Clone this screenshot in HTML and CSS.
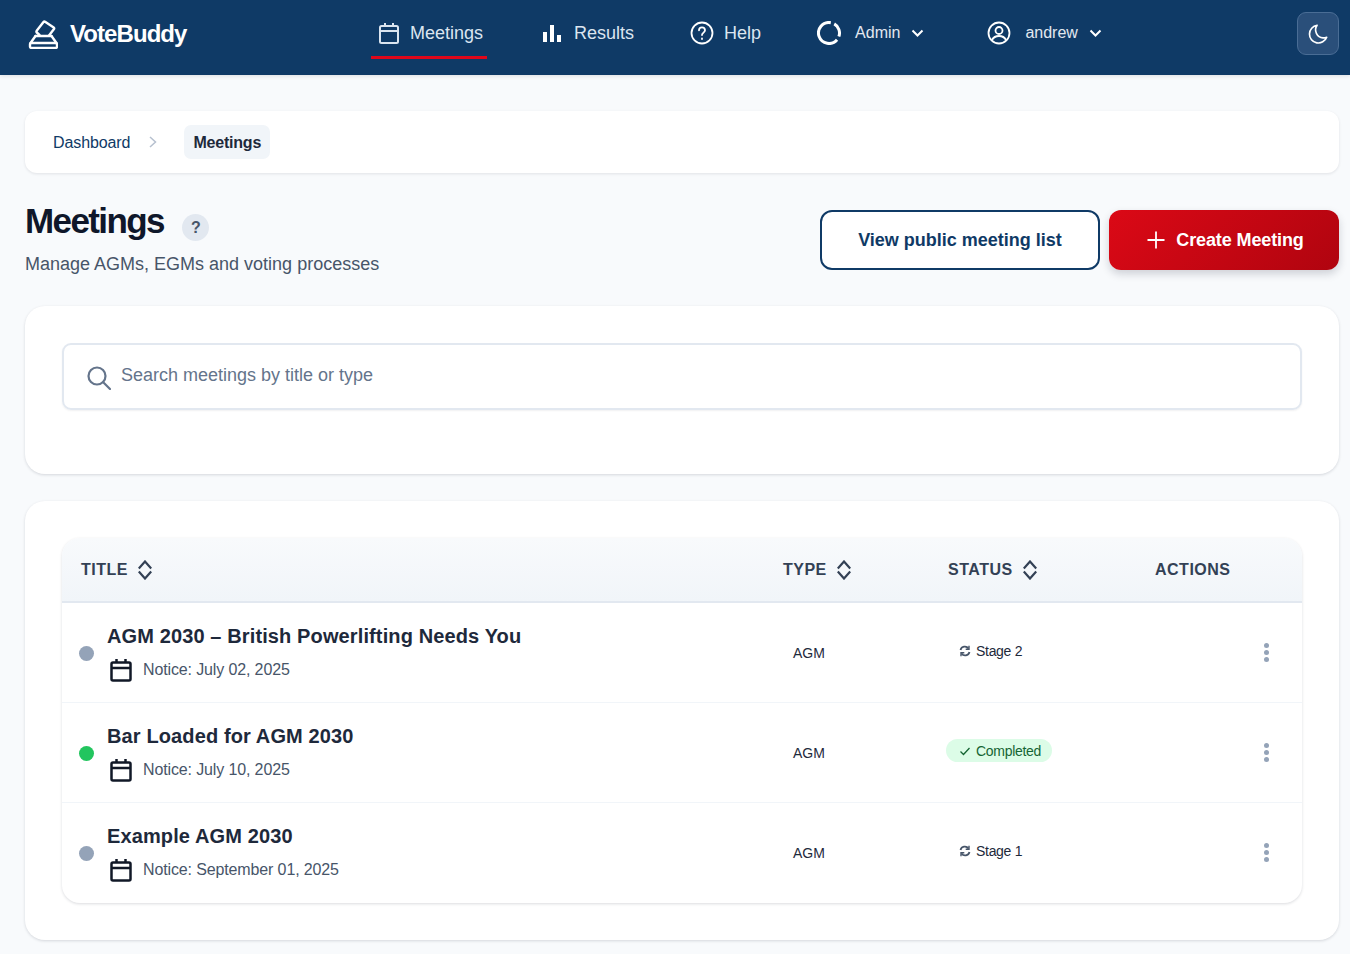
FILE: index.html
```html
<!DOCTYPE html>
<html lang="en">
<head>
<meta charset="utf-8">
<title>Meetings - VoteBuddy</title>
<link rel="stylesheet" href="styles.css">
</head>
<body>
<header class="topbar">
  <a class="brand">
    <svg class="brand-icon" viewBox="0 0 30 30" fill="none" stroke="currentColor" stroke-width="2.400" stroke-linejoin="round" stroke-linecap="round"><path d="M11.500 16 8.800 13.500a1.200 1.200 0 0 1-.1-1.700L15.500 3a1.200 1.200 0 0 1 1.600-.3l8.600 5.700a1.200 1.200 0 0 1 .3 1.700L21 16.500"/><path d="M7.500 17h16"/><path d="M7.500 17 2.500 24M23.500 17l5 7"/><rect x="2" y="24" width="27" height="5" rx="1.500"/></svg>
    <span>VoteBuddy</span>
  </a>
  <nav class="nav">
    <a class="nav-item nav-active nav-meetings">
      <svg class="nav-icon" viewBox="0 0 24 24" fill="none" stroke="currentColor" stroke-width="2"><rect x="3" y="5" width="18" height="17" rx="1.500"/><path d="M3 10h18M8 2v4M16 2v4"/></svg>
      <span>Meetings</span>
    </a>
    <a class="nav-item nav-results">
      <svg class="nav-icon nav-icon-results" viewBox="0 0 20 20" fill="currentColor"><rect x="1" y="9" width="4" height="10"/><rect x="8" y="2" width="4" height="17"/><rect x="15" y="12" width="4" height="7"/></svg>
      <span>Results</span>
    </a>
    <a class="nav-item nav-help">
      <svg class="nav-icon" viewBox="0 0 24 24" fill="none" stroke="currentColor" stroke-width="1.800" stroke-linecap="round"><circle cx="12" cy="12" r="10.500"/><path d="M9 9.300a3 3 0 0 1 6 0c0 2.200-3 2.400-3 4.700"/><path d="M12 17.500v.5"/></svg>
      <span>Help</span>
    </a>
    <a class="nav-item nav-admin">
      <svg class="nav-icon" viewBox="0 0 24 24" fill="none" stroke="currentColor" stroke-width="3"><path d="M17.250 2.900A10.500 10.500 0 0 1 21.870 15.600"/><path d="M20.040 18.750A10.500 10.500 0 1 1 13.800 1.660"/></svg>
      <span class="nav-small">Admin</span>
      <svg class="chev" viewBox="0 0 12 8" fill="none" stroke="currentColor" stroke-width="2"><path d="m1 1.500 5 5 5-5"/></svg>
    </a>
    <a class="nav-item nav-user">
      <svg class="nav-icon" viewBox="0 0 24 24" fill="none" stroke="currentColor" stroke-width="1.800"><circle cx="12" cy="12" r="10.500"/><circle cx="12" cy="9.500" r="3.500"/><path d="M5 19c1.500-3 4-4 7-4s5.500 1 7 4"/></svg>
      <span class="nav-small">andrew</span>
      <svg class="chev" viewBox="0 0 12 8" fill="none" stroke="currentColor" stroke-width="2"><path d="m1 1.500 5 5 5-5"/></svg>
    </a>
  </nav>
  <button class="theme-btn" aria-label="Toggle theme">
    <svg viewBox="0 0 24 24" fill="none" stroke="currentColor" stroke-width="1.800" stroke-linejoin="round"><path d="M11 2.500a9.700 9.700 0 1 0 10.500 13 9 9 0 0 1-4 .8A8.800 8.800 0 0 1 11 2.500Z"/></svg>
  </button>
</header>

<main class="page">
  <nav class="crumbs">
    <a class="crumb-link">Dashboard</a>
    <svg class="crumb-sep" viewBox="0 0 8 12" fill="none" stroke="currentColor" stroke-width="1.500"><path d="m1 1 5.500 5L1 11"/></svg>
    <span class="crumb-current">Meetings</span>
  </nav>

  <section class="heading">
    <div class="heading-text">
      <div class="title-row">
        <h1>Meetings</h1>
        <span class="help-dot">?</span>
      </div>
      <p class="subtitle">Manage AGMs, EGMs and voting processes</p>
    </div>
    <div class="heading-actions">
      <a class="btn btn-outline">View public meeting list</a>
      <a class="btn btn-primary">
        <svg class="btn-plus" viewBox="0 0 18 18" fill="none" stroke="currentColor" stroke-width="1.800"><path d="M9 .5v17M.5 9h17"/></svg>
        <span>Create Meeting</span>
      </a>
    </div>
  </section>

  <section class="card search-card">
    <div class="search-box">
      <svg class="search-icon" viewBox="0 0 24 24" fill="none" stroke="currentColor" stroke-width="2.200" stroke-linecap="round"><circle cx="10" cy="10" r="8.500"/><path d="m16.200 16.200 6.800 6.800"/></svg>
      <span class="search-placeholder">Search meetings by title or type</span>
    </div>
  </section>

  <section class="card table-card">
    <div class="table">
      <div class="row row-head">
        <div class="col-title th">TITLE <svg class="sort" viewBox="0 0 14 20" fill="none" stroke="currentColor" stroke-width="2.200"><path d="m.8 8.500 6.200-7 6.200 7M.8 11.500l6.200 7 6.200-7"/></svg></div>
        <div class="col-type th">TYPE <svg class="sort" viewBox="0 0 14 20" fill="none" stroke="currentColor" stroke-width="2.200"><path d="m.8 8.500 6.200-7 6.200 7M.8 11.500l6.200 7 6.200-7"/></svg></div>
        <div class="col-status th">STATUS <svg class="sort" viewBox="0 0 14 20" fill="none" stroke="currentColor" stroke-width="2.200"><path d="m.8 8.500 6.200-7 6.200 7M.8 11.500l6.200 7 6.200-7"/></svg></div>
        <div class="col-actions th">ACTIONS</div>
      </div>

      <div class="row row-body">
        <div class="col-title meeting">
          <span class="dot dot-grey"></span>
          <div class="meeting-text">
            <div class="meeting-name">AGM 2030 – British Powerlifting Needs You</div>
            <div class="meeting-date">
              <svg class="cal" viewBox="0 0 24 24" fill="none" stroke="currentColor" stroke-width="2.500"><rect x="2.500" y="4.500" width="19" height="18" rx="1.500"/><path d="M2.500 10h19M7.500 1v4M16.500 1v4"/></svg>
              <span>Notice: July 02, 2025</span>
            </div>
          </div>
        </div>
        <div class="col-type type-cell">AGM</div>
        <div class="col-status">
          <span class="badge badge-stage">
            <svg class="badge-icon" viewBox="0 0 12 12" fill="none" stroke="currentColor" stroke-width="1.800"><path d="M1.500 5A4.500 4.500 0 0 1 9.500 3.500M10.500 7a4.500 4.500 0 0 1-8 1.500"/><path d="M10 .8v3.400H6.700M2 11.200V7.800h3.300" stroke-width="1.400"/></svg>
            Stage 2
          </span>
        </div>
        <div class="col-actions kebab"><i></i><i></i><i></i></div>
      </div>

      <div class="row row-body">
        <div class="col-title meeting">
          <span class="dot dot-green"></span>
          <div class="meeting-text">
            <div class="meeting-name">Bar Loaded for AGM 2030</div>
            <div class="meeting-date">
              <svg class="cal" viewBox="0 0 24 24" fill="none" stroke="currentColor" stroke-width="2.500"><rect x="2.500" y="4.500" width="19" height="18" rx="1.500"/><path d="M2.500 10h19M7.500 1v4M16.500 1v4"/></svg>
              <span>Notice: July 10, 2025</span>
            </div>
          </div>
        </div>
        <div class="col-type type-cell">AGM</div>
        <div class="col-status">
          <span class="badge badge-done">
            <svg class="badge-icon" viewBox="0 0 12 12" fill="none" stroke="currentColor" stroke-width="1.300"><path d="m1.500 6.500 3 3 6-6.500"/></svg>
            Completed
          </span>
        </div>
        <div class="col-actions kebab"><i></i><i></i><i></i></div>
      </div>

      <div class="row row-body">
        <div class="col-title meeting">
          <span class="dot dot-grey"></span>
          <div class="meeting-text">
            <div class="meeting-name">Example AGM 2030</div>
            <div class="meeting-date">
              <svg class="cal" viewBox="0 0 24 24" fill="none" stroke="currentColor" stroke-width="2.500"><rect x="2.500" y="4.500" width="19" height="18" rx="1.500"/><path d="M2.500 10h19M7.500 1v4M16.500 1v4"/></svg>
              <span>Notice: September 01, 2025</span>
            </div>
          </div>
        </div>
        <div class="col-type type-cell">AGM</div>
        <div class="col-status">
          <span class="badge badge-stage">
            <svg class="badge-icon" viewBox="0 0 12 12" fill="none" stroke="currentColor" stroke-width="1.800"><path d="M1.500 5A4.500 4.500 0 0 1 9.500 3.500M10.500 7a4.500 4.500 0 0 1-8 1.500"/><path d="M10 .8v3.400H6.700M2 11.200V7.800h3.300" stroke-width="1.400"/></svg>
            Stage 1
          </span>
        </div>
        <div class="col-actions kebab"><i></i><i></i><i></i></div>
      </div>
    </div>
  </section>
</main>
</body>
</html>
```
FILE: styles.css
```css
* { box-sizing: border-box; }
html, body { margin: 0; padding: 0; }
body {
  background: #f8fafc;
  color: #1e293b;
  font-family: "Liberation Sans", Arial, sans-serif;
  height: 954px;
  overflow: hidden;
}

/* top bar */
.topbar {
  height: 75px;
  background: #0f3a66;
  color: #fff;
  display: flex;
  align-items: center;
  padding: 0 11px 0 28px;
  box-shadow: 0 1px 4px rgba(15, 23, 42, .12);
}
.brand {
  display: flex;
  align-items: center;
  gap: 12px;
  font-size: 24px;
  font-weight: 700;
  letter-spacing: -.93px;
  width: 343px;
  flex: none;
  margin-top: -8px;
}
.brand-icon { width: 30px; height: 30px; flex: none; }
.nav { display: flex; align-items: flex-start; flex: 1; height: 59px; margin-top: -16px; }
.nav-item {
  display: flex;
  align-items: center;
  height: 59px;
  color: #dbe5f0;
  font-size: 18px;
  padding-top: 10px;
  border-bottom: 3px solid transparent;
  flex: none;
}
.nav-icon { width: 24px; height: 24px; flex: none; color: #fff; }
.nav-active { border-bottom-color: #e0071a; }
.nav-meetings { width: 116px; padding-left: 6px; gap: 9px; }
.nav-meetings .nav-icon { color: #dbe5f0; }
.nav-results { margin-left: 55px; gap: 12px; }
.nav-icon-results { width: 20px; height: 20px; }
.nav-help { margin-left: 56px; gap: 10px; }
.nav-admin { margin-left: 56px; gap: 14px; }
.nav-user { margin-left: 63px; gap: 14px; }
.nav-small { font-size: 16px; color: #e2e8f0; }
.chev { width: 13px; height: 8px; margin-left: -3px; color: #fff; flex: none; }
.theme-btn {
  width: 42px;
  height: 43px;
  background: #2a4f7a;
  border: 1px solid #4a6d95;
  border-radius: 9px;
  color: #fff;
  padding: 9px;
  display: flex;
  align-items: center;
  justify-content: center;
  margin-top: -8px;
  flex: none;
}
.theme-btn svg { width: 22px; height: 22px; }

/* page */
.page { padding: 36px 11px 0 25px; }
.crumbs {
  height: 62px;
  background: #fff;
  border-radius: 12px;
  box-shadow: 0 1px 3px rgba(15, 23, 42, .1);
  display: flex;
  align-items: center;
  padding-left: 28px;
  font-size: 16px;
}
.crumb-link { color: #0f3a66; letter-spacing: -.1px; margin-top: 2px; }
.crumb-sep { width: 8px; height: 12px; color: #b6c0cf; margin-left: 19px; flex: none; }
.crumb-current {
  margin-left: 27px;
  background: #f1f5f9;
  border-radius: 7px;
  height: 34px;
  padding: 2px 9px 0;
  display: flex;
  align-items: center;
  font-weight: 700;
  color: #1e293b;
  letter-spacing: -.2px;
}

.heading { display: flex; justify-content: space-between; margin-top: 28px; height: 105px; }
.title-row { display: flex; align-items: center; height: 42px; }
h1 {
  margin: -2px 0 0;
  font-size: 35px;
  line-height: 42px;
  font-weight: 700;
  color: #0f172a;
  letter-spacing: -1.6px;
}
.help-dot {
  width: 27px;
  height: 27px;
  border-radius: 50%;
  background: #e2e8f0;
  color: #475569;
  font-size: 16px;
  font-weight: 700;
  display: flex;
  align-items: center;
  justify-content: center;
  padding-left: 1px;
  margin: 11px 0 0 18px;
}
.subtitle { margin: 9px 0 0; color: #475569; font-size: 18px; line-height: 24px; }
.heading-actions { display: flex; gap: 9px; margin-top: 9px; }
.btn {
  height: 60px;
  border-radius: 12px;
  display: flex;
  align-items: center;
  justify-content: center;
  font-weight: 700;
  font-size: 18px;
}
.btn-outline { width: 280px; background: #fff; border: 2px solid #0f3a66; color: #0f3a66; }
.btn-primary {
  width: 230px;
  background: linear-gradient(135deg, #db0916, #b0040f);
  color: #fff;
  gap: 11px;
  padding-left: 3px;
  box-shadow: 0 4px 8px rgba(15, 23, 42, .18);
  letter-spacing: -.12px;
}
.btn-plus { width: 18px; height: 18px; flex: none; }

.card { background: #fff; border-radius: 20px; box-shadow: 0 1px 3px rgba(15, 23, 42, .15); }
.search-card { height: 168px; padding: 37px; }
.search-box {
  height: 67px;
  border: 2px solid #e2e8f0;
  border-radius: 9px;
  display: flex;
  align-items: center;
  padding-left: 23px;
  gap: 10px;
  box-shadow: 0 1px 2px rgba(15, 23, 42, .06);
}
.search-icon { width: 24px; height: 24px; color: #64748b; flex: none; margin-top: 2px; }
.search-placeholder { color: #64748b; font-size: 18px; margin-top: -2px; }

.table-card { margin-top: 27px; height: 439px; padding: 37px 37px 0 37px; }
.table {
  border-radius: 18px;
  box-shadow: 0 1px 3px rgba(15, 23, 42, .15);
  background: #fff;
  overflow: hidden;
}
.row { display: flex; align-items: center; }
.row-head {
  height: 65px;
  background: linear-gradient(180deg, #f8fafc, #f1f5f9);
  border-bottom: 2px solid #e2e8f0;
}
.row-body { height: 100px; border-bottom: 1px solid #f1f5f9; }
.row-body:last-child { border-bottom: 0; }
.col-title { width: 721px; flex: none; padding-left: 19px; }
.col-type { width: 165px; flex: none; }
.col-status { width: 207px; flex: none; }
.col-actions { flex: 1; }
.th {
  display: flex;
  align-items: center;
  gap: 10px;
  font-size: 16px;
  font-weight: 700;
  color: #334155;
  letter-spacing: .5px;
}
.sort { width: 14px; height: 20px; flex: none; }
.meeting { display: flex; align-items: center; gap: 13px; padding-left: 17px; }
.meeting-text { padding-top: 2px; }
.dot { width: 15px; height: 15px; border-radius: 50%; flex: none; margin-top: 1px; }
.dot-grey { background: #94a3b8; }
.dot-green { background: #22c55e; }
.meeting-name { font-size: 20px; font-weight: 700; color: #1e293b; line-height: 24px; letter-spacing: .12px; margin-top: -2px; }
.meeting-date {
  display: flex;
  align-items: center;
  gap: 10px;
  margin-top: 10px;
  color: #475569;
  font-size: 16px;
  letter-spacing: -.13px;
  height: 24px;
}
.cal { width: 24px; height: 24px; color: #111827; flex: none; margin-left: 2px; }
.type-cell { font-size: 14px; color: #1e293b; padding-left: 10px; letter-spacing: -.05px; }
.badge {
  display: inline-flex;
  align-items: center;
  height: 23px;
  gap: 5px;
  font-size: 14px;
  letter-spacing: -.3px;
  padding: 0 11px 0 13px;
  border-radius: 12px;
  margin: -4px 0 0 -2px;
  vertical-align: middle;
}
.badge-icon { width: 12px; height: 12px; flex: none; }
.badge-stage { color: #1e293b; }
.badge-stage .badge-icon { color: #475569; }
.badge-done { background: #dcfce7; color: #166534; }
.kebab { display: flex; flex-direction: column; align-items: flex-end; gap: 2px; padding-right: 33px; margin-top: -1px; }
.kebab i { display: block; width: 5px; height: 5px; border-radius: 50%; background: #94a3b8; }
```
